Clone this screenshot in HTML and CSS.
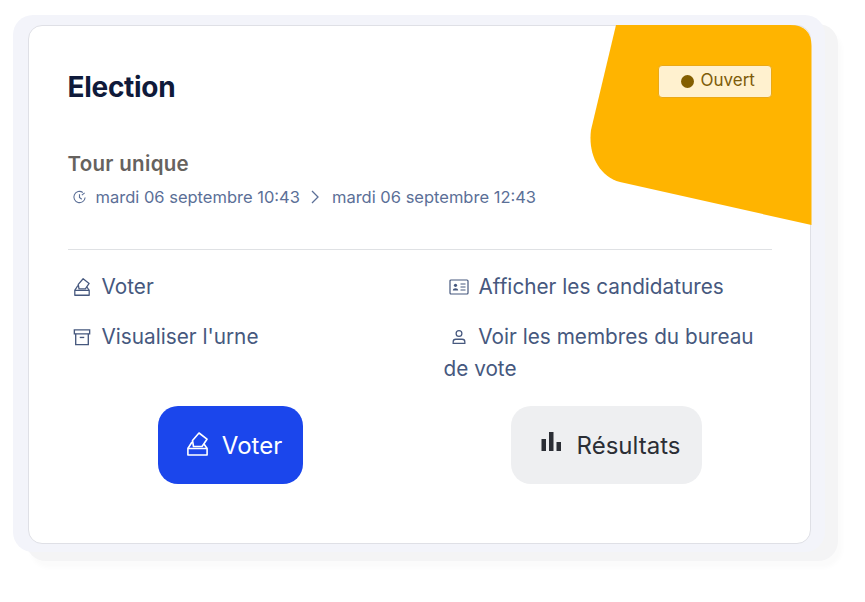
FILE: index.html
```html
<!DOCTYPE html>
<html lang="fr">
<head>
<meta charset="utf-8">
<title>Election</title>
<link rel="stylesheet" href="styles.css">
</head>
<body>
<div class="frame">
  <main class="card">
    <svg class="corner" viewBox="0 0 222 202" aria-hidden="true"><path d="M26 0H200Q221.500 0 221.500 21V200L30 157C8 151-2 128 1 105Z" fill="#ffb400"/></svg>
    <header class="head">
      <h1 class="title">Election</h1>
      <span class="badge"><i class="dot"></i>Ouvert</span>
    </header>
    <h2 class="round">Tour unique</h2>
    <p class="dates">
      <svg class="clock" viewBox="0 0 16 16" fill="none" stroke="#5b6f97" stroke-width="1.200"><path d="M11.500 2.600A6 6 0 1 0 14 8"/><path d="M8 4.600V8l2.400 1.800"/><path d="M10.500 5.500 13.500 3"/></svg>
      <span>mardi 06 septembre 10:43</span>
      <svg class="chev" viewBox="0 0 10 16" fill="none" stroke="#5b6f97" stroke-width="1.300"><path d="M2 2l6 6-6 6"/></svg>
      <span>mardi 06 septembre 12:43</span>
    </p>
    <hr class="rule">
    <div class="links">
      <div class="link">
        <svg class="ic vote" viewBox="0 0 21 24" fill="none" stroke="#46587e" stroke-width="1.700" stroke-linejoin="round"><path d="M.9 16.500h19.200v6.500H.9z"/><path d="M.9 16.500 5 10M20.100 16.500 17 12"/><path d="M5.500 8.500 12 1l8 6.200-5 7.300H6.500z"/></svg>
        <span>Voter</span>
      </div>
      <div class="link">
        <svg class="ic id" viewBox="0 0 20 16" fill="none" stroke="#46587e" stroke-width="1.200"><rect x="1" y="1" width="18" height="14" rx="1"/><circle cx="6.500" cy="6.300" r="1.600" fill="#46587e" stroke="none"/><path d="M3.800 11.500c0-3 5.400-3 5.400 0z" fill="#46587e" stroke="none"/><path d="M11.500 5h5M11.500 8h5M11.500 11h5"/></svg>
        <span>Afficher les candidatures</span>
      </div>
      <div class="link">
        <svg class="ic box" viewBox="0 0 20 20" fill="none" stroke="#46587e" stroke-width="1.500"><path d="M1.500 2h17v4.500h-17z"/><path d="M3 6.500V18.500h14V6.500"/><path d="M7.500 10.500h5"/></svg>
        <span>Visualiser l'urne</span>
      </div>
      <div class="link wrap">
        <svg class="ic person" viewBox="0 0 20 20" fill="none" stroke="#46587e" stroke-width="1.400"><circle cx="10" cy="6" r="3.200"/><path d="M3.500 17v-1.500c0-2 1.500-3 3-3h7c1.500 0 3 1 3 3V17z"/></svg>
        <span>Voir les membres du bureau de vote</span>
      </div>
    </div>
    <div class="actions">
      <button class="btn primary">
        <svg class="bi" viewBox="0 0 21 24" fill="none" stroke="#fff" stroke-width="1.600" stroke-linejoin="round"><path d="M.9 16.500h19.200v6.500H.9z"/><path d="M.9 16.500 5 10M20.100 16.500 17 12"/><path d="M5.500 8.500 12 1l8 6.200-5 7.300H6.500z"/></svg>
        Voter
      </button>
      <button class="btn secondary">
        <svg class="bi chart" viewBox="0 0 20 20" fill="#2b2e35"><path d="M0 7h4.500v12H0zM7.500 0H12v19H7.500zM15 10h4.500v9H15z"/></svg>
        Résultats
      </button>
    </div>
  </main>
</div>
</body>
</html>
```
FILE: styles.css
```css
* { box-sizing: border-box; }
html, body { margin: 0; height: 100%; background: #fff; }
body { padding: 15px 40px 0 13px; font-family: Inter, "Liberation Sans", sans-serif; overflow: hidden; }
.frame {
  width: 812px;
  height: 537px;
  padding: 10px 14px 8px 15px;
  background: #f3f4fa;
  border-radius: 20px;
  box-shadow: 13px 9px 0 0 #f4f4f5, 17px 16px 5px 0 #fbfbfb;
}
.card {
  position: relative;
  height: 519px;
  padding: 39px 38.500px 0 38.500px;
  background: #fff;
  border: 1.500px solid #dfe0e6;
  border-radius: 14px;
}
.corner { position: absolute; top: -1.500px; right: -2px; width: 222px; height: 202px; }
.head { position: relative; display: flex; justify-content: space-between; align-items: flex-start; }
.title { margin: 0; font-size: 28px; line-height: 44px; font-weight: 700; color: #0f1a3a; letter-spacing: -0.300px; }
.badge {
  display: flex;
  align-items: center;
  width: 114px;
  height: 33px;
  padding: 0 0 3px 22px;
  background: #fff1cf;
  border: 1px solid #eaa917;
  border-radius: 4px;
  color: #7d5b08;
  font-size: 17px;
}
.dot { flex: none; width: 13px; height: 13px; margin: 3px 7px 0 0; border-radius: 50%; background: #835e00; }
.round { position: relative; margin: 41px 0 0; font-size: 20.500px; line-height: 28px; font-weight: 600; color: #66625e; letter-spacing: .300px; }
.dates { position: relative; display: flex; align-items: center; margin: 7px 0 0; height: 24px; font-size: 16.500px; color: #5b6f97; }
.clock { width: 15px; height: 15px; margin: 0 9px 0 4px; }
.chev { width: 10px; height: 16px; margin: 0 12px 0 10px; }
.rule { margin: 40px 0 0; border: 0; border-top: 1.500px solid #dfe1e4; }
.links { display: grid; grid-template-columns: 376px 1fr; align-items: start; margin-top: 21px; font-size: 20.750px; line-height: 32px; color: #46587e; }
.link { min-height: 32px; margin-bottom: 18px; display: flex; align-items: center; }
.link span { margin-left: 10px; }
.ic { width: 18px; height: 18px; margin-left: 6px; flex: none; }
.vote { width: 16px; height: 18px; margin-right: 2px; }
.id { width: 20px; height: 16px; margin-left: 5px; }
.wrap { display: block; margin-bottom: 0; }
.wrap .ic { display: inline-block; vertical-align: -2px; }
.wrap span { margin-left: 5px; }
.box { margin: 0 1px 0 5px; }
.actions { display: grid; grid-template-columns: 376px 1fr; margin-top: 21px; }
.btn { display: flex; align-items: center; justify-content: center; height: 78px; padding: 0 0 0 9px; border: 0; border-radius: 20px; font: 400 24px Inter, "Liberation Sans", sans-serif; }
.primary { width: 145px; margin-left: 90px; background: #1b46ec; color: #fff; }
.secondary { width: 191px; margin-left: 67px; background: #eeeff1; color: #2b2e35; }
.bi { width: 21px; height: 24px; margin: -3px 14px 0 0; }
.chart { width: 21px; height: 20px; margin: -6px 15px 0 0; }
```
